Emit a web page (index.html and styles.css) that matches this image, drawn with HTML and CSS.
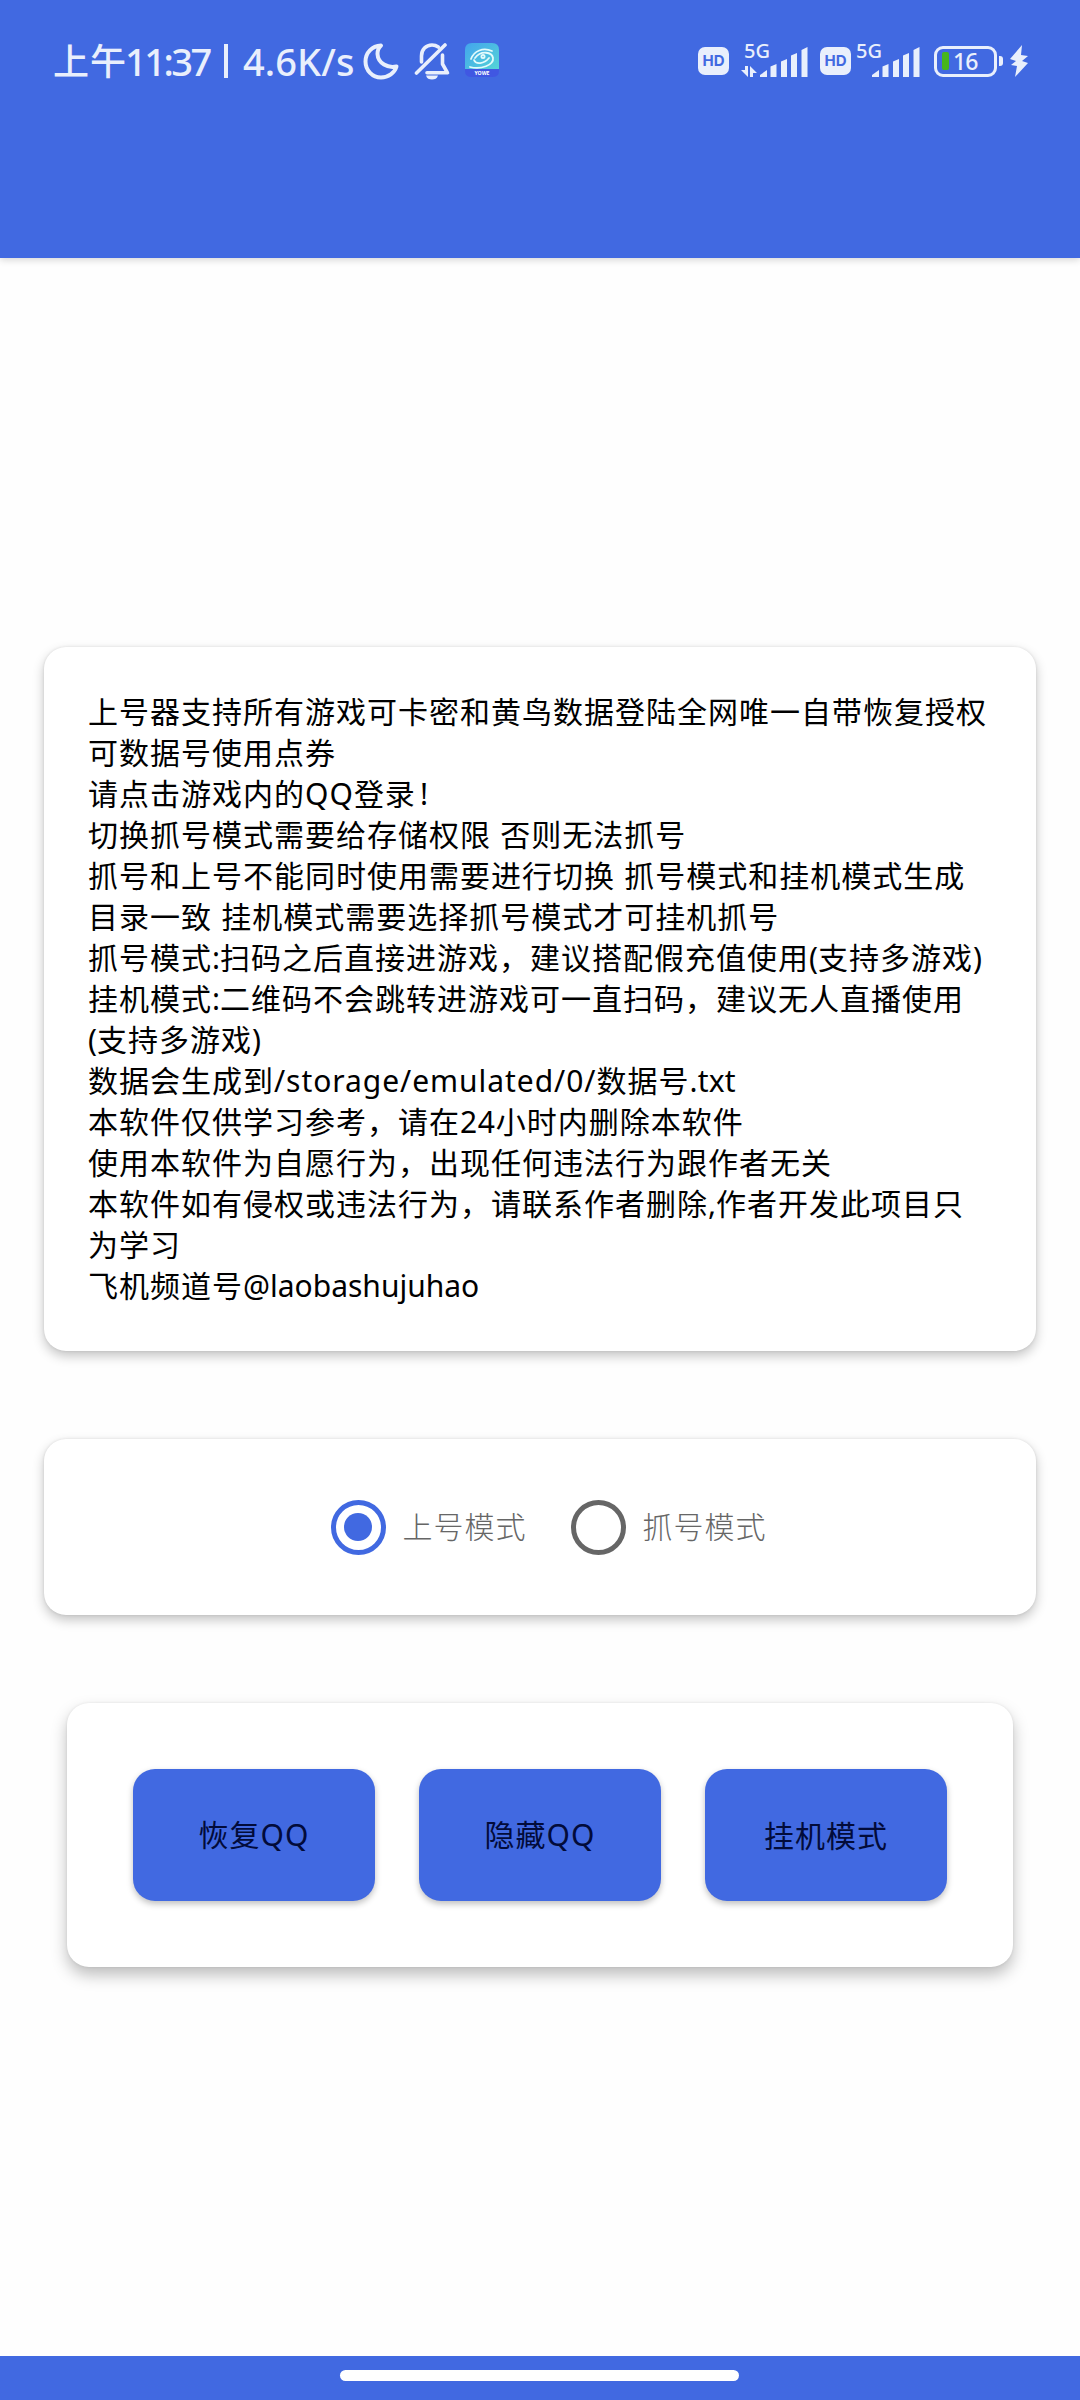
FILE: index.html
```html
<!DOCTYPE html>
<html lang="zh-CN">
<head>
<meta charset="utf-8">
<title>上号器</title>
<link rel="stylesheet" href="styles.css">
</head>
<body>
<header class="appbar">
  <div class="status">
    <div class="status-left">
      <span class="clock"><span class="clock-cjk">上午</span><span class="clock-time">11:37</span><span class="clock-bar"></span><span class="clock-speed">4.6K/s</span></span>
      <svg class="moon" width="36" height="38" viewBox="0 0 36 38"><path d="M18 3.500C9 4 2.500 10.500 2.500 19.500C2.500 28.500 9.500 35.500 18 35.500C25.500 35.500 31.500 31 33.500 24.500C25 26.500 15 21.500 14.500 12C14.400 8.500 15.800 5.500 18 3.500Z" fill="none" stroke="#e9effc" stroke-width="4" stroke-linejoin="round"/></svg>
      <svg class="bell" width="36" height="38" viewBox="0 0 36 38"><g fill="none" stroke="#e9effc" stroke-width="3.600" stroke-linecap="round" stroke-linejoin="round"><path d="M7.500 20V14C7.500 7.500 12 3 18 3C20.500 3 22.500 3.700 24.300 5"/><path d="M28.500 13V22L33.500 30.800H13"/><path d="M31 3L2.500 31"/></g><path d="M12 33.500H24C23 36.500 21 37.500 18 37.500S13 36.500 12 33.500Z" fill="#e9effc"/></svg>
      <svg class="app" width="34" height="34" viewBox="0 0 34 34"><defs><linearGradient id="sea" x1="0" y1="0" x2="1" y2="1"><stop offset="0" stop-color="#43a4ed"/><stop offset="1" stop-color="#55d5d6"/></linearGradient></defs><path d="M7 0H27Q34 0 34 7V27H0V7Q0 0 7 0Z" fill="url(#sea)"/><path d="M0 26H34V28Q34 34 27 34H7Q0 34 0 28Z" fill="#4057e2"/><g fill="none" stroke="#e3fbfb" stroke-width="1.800" stroke-linecap="round"><path d="M6 16C9 8 18 4 27 8"/><path d="M10 15C16 7 27 9 28 15C29 22 16 27 5 24"/><path d="M9 17C11 22 19 21 24 15"/><circle cx="18" cy="13.500" r="1.600"/></g><text x="17" y="32" text-anchor="middle" textLength="15" lengthAdjust="spacingAndGlyphs" class="app-name">YOWE</text></svg>
    </div>
    <div class="status-right">
      <span class="hd">HD</span>
      <span class="signal"><span class="net">5G</span>
        <svg width="68" height="34" viewBox="0 0 68 34"><g fill="#e9effc"><path d="M5 22H8V33L1 26H5Z"/><path d="M10 33V22L17 29H13V33Z"/><path d="M20 33V31L27 26V33Z"/><path d="M30.500 33V22.500L36.500 20V33Z"/><path d="M41 33V17.500L47 15V33Z"/><path d="M51 33V11.500L57 9V33Z"/><path d="M61.500 33V6L67.500 3V33Z"/></g></svg></span>
      <span class="hd hd-second">HD</span>
      <span class="signal signal-second"><span class="net">5G</span>
        <svg width="68" height="34" viewBox="0 0 68 34"><g fill="#e9effc"><path d="M20 33V31L27 26V33Z"/><path d="M30.500 33V22.500L36.500 20V33Z"/><path d="M41 33V17.500L47 15V33Z"/><path d="M51 33V11.500L57 9V33Z"/><path d="M61.500 33V6L67.500 3V33Z"/></g></svg></span>
      <span class="battery"><span class="level"></span><span class="percent">16</span></span>
      <span class="cap"></span>
      <svg class="bolt" width="20" height="32" viewBox="0 0 20 32"><path d="M13 0L1 14L7 16L2 20L8 21L6 32L19 18L13 16L19 11L12 10Z" fill="#e9effc"/></svg>
    </div>
  </div>
</header>
<main class="content">
  <section class="card notice">
    <p>上号器支持所有游戏可卡密和黄鸟数据登陆全网唯一自带恢复授权</p>
    <p>可数据号使用点券</p>
    <p>请点击游戏内的<span class="qq">QQ</span>登录<span class="bang">!</span></p>
    <p>切换抓号模式需要给存储权限<span class="sp"> </span>否则无法抓号</p>
    <p>抓号和上号不能同时使用需要进行切换<span class="sp"> </span>抓号模式和挂机模式生成</p>
    <p>目录一致<span class="sp"> </span>挂机模式需要选择抓号模式才可挂机抓号</p>
    <p>抓号模式<span class="colon">:</span>扫码之后直接进游戏，建议搭配假充值使用<span class="paren">(</span>支持多游戏<span class="paren">)</span></p>
    <p>挂机模式<span class="colon">:</span>二维码不会跳转进游戏可一直扫码，建议无人直播使用</p>
    <p><span class="paren">(</span>支持多游戏<span class="paren">)</span></p>
    <p>数据会生成到<span class="path">/storage/emulated/0/</span>数据号<span class="ext">.txt</span></p>
    <p>本软件仅供学习参考，请在<span class="num">24</span>小时内删除本软件</p>
    <p>使用本软件为自愿行为，出现任何违法行为跟作者无关</p>
    <p>本软件如有侵权或违法行为，请联系作者删除<span class="colon">,</span>作者开发此项目只</p>
    <p>为学习</p>
    <p>飞机频道号<span class="handle">@laobashujuhao</span></p>
  </section>
  <section class="card modes">
    <label class="mode"><span class="radio radio-on"></span><span class="mode-name">上号模式</span></label>
    <label class="mode"><span class="radio"></span><span class="mode-name">抓号模式</span></label>
  </section>
  <section class="card actions">
    <button class="btn">恢复<span class="qq">QQ</span></button>
    <button class="btn">隐藏<span class="qq">QQ</span></button>
    <button class="btn">挂机模式</button>
  </section>
</main>
<footer class="navbar"><span class="pill"></span></footer>
</body>
</html>
```
FILE: styles.css
```css
* { box-sizing: border-box; }
body {
  margin: 0;
  width: 1080px;
  height: 2400px;
  display: flex;
  flex-direction: column;
  background: #fefefe;
  color: #000;
  font-family: "Noto Sans CJK SC", sans-serif;
  overflow: hidden;
}
.appbar {
  height: 258px;
  flex: none;
  background: #4169e1;
  box-shadow: 0 2px 7px rgba(0, 0, 0, .16);
}
.status {
  height: 122px;
  padding: 0 51px 0 53px;
  display: flex;
  justify-content: space-between;
  align-items: center;
  color: #e9effc;
}
.status-left, .status-right { display: flex; align-items: center; }
.clock { display: flex; align-items: center; width: 310px; font: 500 38px/44px "Noto Sans", sans-serif; white-space: nowrap; }
.clock-cjk { font: 500 36px/44px "Noto Sans CJK SC", sans-serif; letter-spacing: 1px; width: 72px; margin-top: -4px; }
.clock-time { width: 99px; letter-spacing: -2.500px; }
.clock-bar { width: 4px; height: 34px; background: #e9effc; margin-right: 15px; }
.clock-speed { letter-spacing: .1px; }
.bell { margin-left: 15px; }
.app { margin-left: 15px; margin-top: -3px; }
.app-name { font: 700 5px "Noto Sans", sans-serif; fill: #fff; }
.hd {
  width: 31px; height: 28px; border-radius: 7px;
  background: #e9effc; color: #4169e1;
  font: 700 15px/28px Inter, sans-serif; text-align: center;
}
.hd-second { margin-left: 12px; }
.signal { position: relative; height: 34px; margin-left: 11px; }
.signal svg { display: block; }
.signal-second { margin-left: 1px; }
.net { position: absolute; left: 4px; top: -3px; font: 500 20px/20px "Noto Sans", sans-serif; }
.battery {
  width: 63px; height: 31px; margin-left: 14px; padding-left: 5px;
  border: 3px solid #e9effc; border-radius: 9px;
  display: flex; align-items: center; gap: 4px;
}
.level { width: 7px; height: 18px; background: #47b51d; border-radius: 2px; }
.percent { font: 500 23px/25px "Noto Sans", sans-serif; letter-spacing: -1px; }
.cap { width: 4px; height: 10px; margin-left: 2px; background: #e9effc; border-radius: 0 3px 3px 0; }
.bolt { margin-left: 6px; }
.content {
  flex: 1;
  display: flex;
  flex-direction: column;
  align-items: center;
  padding-top: 389px;
  gap: 88px;
}
.card {
  width: 992px;
  border-radius: 22px;
  background: #fff;
  box-shadow: 0 5px 12px rgba(0, 0, 0, .23), 0 0 3px rgba(0, 0, 0, .1);
}
.notice { height: 704px; padding: 43px 44px 0; font-size: 30px; line-height: 41px; letter-spacing: 1px; }
.notice p { margin: 0; height: 41px; white-space: nowrap; }
.notice span, .btn span { font-family: "Noto Sans", sans-serif; letter-spacing: 0; }
.notice .sp { letter-spacing: 1.500px; }
.notice .qq, .btn .qq { letter-spacing: 1px; }
.notice .bang { padding-left: 4px; }
.notice .path { letter-spacing: .950px; }
.notice .ext { letter-spacing: .2px; }
.notice .num { letter-spacing: .7px; }
.modes { height: 176px; display: flex; justify-content: center; gap: 44px; padding-left: 17px; }
.mode { display: flex; align-items: center; gap: 17px; color: #666; font-size: 30px; font-weight: 300; letter-spacing: 1px; }
.mode-name { margin-top: -4px; }
.radio { width: 55px; height: 55px; border: 5.500px solid #666; border-radius: 50%; display: grid; place-items: center; }
.radio-on { border-color: #4169e1; }
.radio-on::before { content: ""; width: 28px; height: 28px; border-radius: 50%; background: #4169e1; }
.actions {
  width: 946px; height: 264px; padding: 66px;
  display: flex; gap: 44px;
  box-shadow: 0 8px 16px rgba(0, 0, 0, .26), 0 0 3px rgba(0, 0, 0, .08);
}
.btn {
  width: 242px; height: 132px; padding: 0 0 2px; border: 0; border-radius: 22px;
  background: #4169e1; color: #020b3a;
  font: 400 30px/41px "Noto Sans CJK SC", sans-serif; letter-spacing: 1px;
  box-shadow: 0 3px 6px rgba(0, 0, 0, .25);
}
.navbar { height: 44px; flex: none; background: #4169e1; display: flex; justify-content: center; padding: 14px 1px 0 0; }
.pill { width: 399px; height: 11px; border-radius: 6px; background: #fff; }
```
